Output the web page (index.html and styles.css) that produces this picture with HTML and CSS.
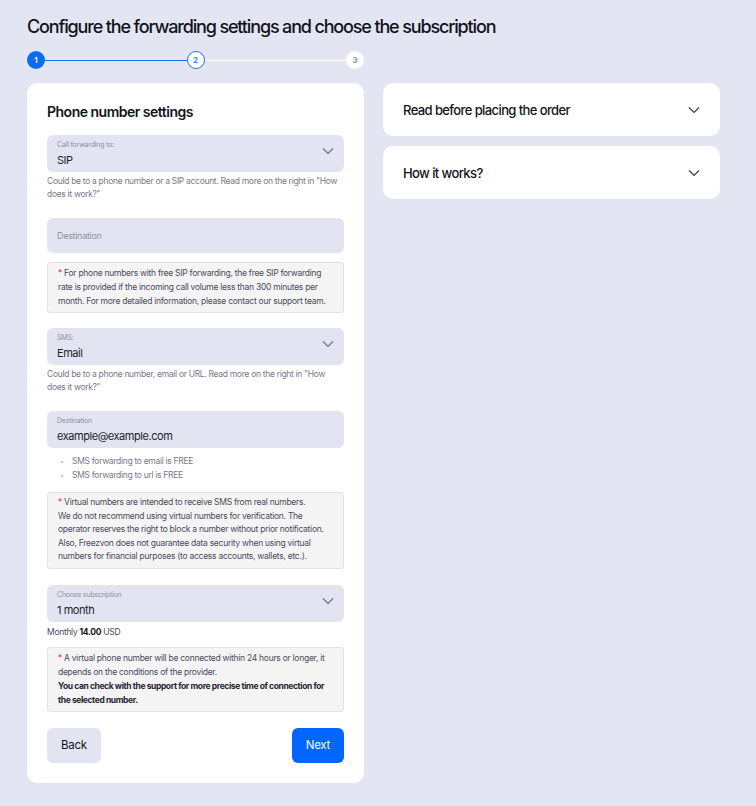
FILE: index.html
```html
<!DOCTYPE html>
<html lang="en">
<head>
    <meta charset="UTF-8">
    <meta name="viewport" content="width=device-width, initial-scale=1.0">
    <title>Configure forwarding</title>
    <link rel="stylesheet" href="styles.css">
</head>
<body>

    <div class="page">
        <h1>Configure the forwarding settings and choose the subscription</h1>

        <div class="stepper">
            <span class="step done">1</span>
            <span class="line active"></span>
            <span class="step current">2</span>
            <span class="line"></span>
            <span class="step">3</span>
        </div>

        <div class="columns">
            <div class="card">
                <h2>Phone number settings</h2>

                <div class="field select">
                    <span class="label">Call forwarding to:</span>
                    <span class="value">SIP</span>
                    <svg class="chevron" width="12" height="8" viewBox="0 0 12 8"><path d="M1 1.5l5 5 5-5" fill="none" stroke="#6b6f80" stroke-width="1.2"/></svg>
                </div>
                <p class="hint">Could be to a phone number or a SIP account. Read more on the right in "How does it work?"</p>

                <div class="field input">
                    <span class="placeholder">Destination</span>
                </div>

                <div class="note first">
                    <span class="star">*</span> For phone numbers with free SIP forwarding, the free SIP forwarding rate is provided if the incoming call volume less than 300 minutes per month. For more detailed information, please contact our support team.
                </div>

                <div class="field select">
                    <span class="label">SMS:</span>
                    <span class="value">Email</span>
                    <svg class="chevron" width="12" height="8" viewBox="0 0 12 8"><path d="M1 1.5l5 5 5-5" fill="none" stroke="#6b6f80" stroke-width="1.2"/></svg>
                </div>
                <p class="hint">Could be to a phone number, email or URL. Read more on the right in "How does it work?"</p>

                <div class="field filled">
                    <span class="label">Destination</span>
                    <span class="value">example@example.com</span>
                </div>

                <ul class="bullets">
                    <li>SMS forwarding to email is FREE</li>
                    <li>SMS forwarding to url is FREE</li>
                </ul>

                <div class="note tall">
                    <span class="star">*</span> Virtual numbers are intended to receive SMS from real numbers.<br>
                    We do not recommend using virtual numbers for verification. The operator reserves the right to block a number without prior notification. Also, Freezvon does not guarantee data security when using virtual numbers for financial purposes (to access accounts, wallets, etc.).
                </div>

                <div class="field select">
                    <span class="label">Choose subscription</span>
                    <span class="value">1 month</span>
                    <svg class="chevron" width="12" height="8" viewBox="0 0 12 8"><path d="M1 1.5l5 5 5-5" fill="none" stroke="#6b6f80" stroke-width="1.2"/></svg>
                </div>
                <p class="price">Monthly <b>14.00</b> USD</p>

                <div class="note">
                    <span class="star">*</span> A virtual phone number will be connected within 24 hours or longer, it depends on the conditions of the provider.<br>
                    <b>You can check with the support for more precise time of connection for the selected number.</b>
                </div>

                <div class="buttons">
                    <button class="back" type="button">Back</button>
                    <button class="next" type="button">Next</button>
                </div>
            </div>

            <div class="side">
                <div class="panel">
                    <span>Read before placing the order</span>
                    <svg width="12" height="8" viewBox="0 0 12 8"><path d="M1 1.5l5 5 5-5" fill="none" stroke="#3a3d4a" stroke-width="1.2"/></svg>
                </div>
                <div class="panel">
                    <span>How it works?</span>
                    <svg width="12" height="8" viewBox="0 0 12 8"><path d="M1 1.5l5 5 5-5" fill="none" stroke="#3a3d4a" stroke-width="1.2"/></svg>
                </div>
            </div>
        </div>
    </div>

</body>
</html>
```

FILE: styles.css
```css
body {
    margin: 0;
    background-color: #e4e5f2;
    font-family: Inter, "Noto Sans", sans-serif;
    color: #111320;
}
.page {
    padding: 14px 36px 24px 27px;
}
h1 {
    margin: 0;
    font-size: 18px;
    font-weight: 500;
    letter-spacing: -1.15px;
    line-height: 26px;
}
.stepper {
    display: flex;
    align-items: center;
    width: 337px;
    margin-top: 11px;
}
.step {
    width: 18px;
    height: 18px;
    border-radius: 50%;
    background: white;
    color: #8a8d99;
    font-size: 8px;
    font-weight: 600;
    display: flex;
    align-items: center;
    justify-content: center;
    box-sizing: border-box;
    flex-shrink: 0;
}
.step.done {
    background: #0b6cf7;
    color: white;
}
.step.current {
    border: 1.5px solid #1a73f5;
    color: #1a73f5;
}
.line {
    flex: 1;
    height: 1px;
    background: white;
}
.line.active {
    background: #1a73f5;
}
.columns {
    display: flex;
    gap: 19px;
    align-items: flex-start;
    margin-top: 14px;
}
.card {
    width: 337px;
    box-sizing: border-box;
    background: white;
    border-radius: 10px;
    padding: 20px 20px 20px;
}
h2 {
    margin: 0 0 14px;
    font-size: 14px;
    font-weight: 600;
    letter-spacing: -0.5px;
    line-height: 18px;
}
.field {
    position: relative;
    background: #e3e4f1;
    border-radius: 6px;
    height: 37px;
    box-sizing: border-box;
    padding: 5px 10px 0;
    display: flex;
    flex-direction: column;
}
.field.input {
    height: 35px;
    justify-content: center;
    padding-top: 0;
}
.label {
    font-size: 7px;
    color: #8d909c;
    line-height: 9px;
    letter-spacing: -0.2px;
}
.value {
    font-size: 11px;
    color: #1c1e2a;
    line-height: 16px;
    margin-top: 3px;
    letter-spacing: -0.45px;
}
.placeholder {
    font-size: 9px;
    color: #8d909c;
    letter-spacing: -0.3px;
}
.chevron {
    position: absolute;
    right: 10px;
    top: 12px;
}
.hint {
    margin: 3px 0 17px;
    font-size: 8.5px;
    line-height: 13px;
    color: #77798a;
    letter-spacing: -0.31px;
}
.note {
    margin: 9px 0 16px;
    background: #f4f4f5;
    border: 1px solid #e2e2e6;
    border-radius: 3px;
    padding: 3px 10px 4px;
    font-size: 8.5px;
    line-height: 14px;
    color: #4a4c58;
    letter-spacing: -0.27px;
}
.note.first {
    margin-bottom: 15px;
}
.note.tall {
    line-height: 13.6px;
    margin-top: 10px;
}
.note b {
    color: #23252f;
    letter-spacing: -0.4px;
}
.star {
    color: #e24a4a;
}
.bullets {
    margin: 6px 0 0;
    padding-left: 25px;
    font-size: 8.5px;
    line-height: 14px;
    color: #77798a;
    letter-spacing: -0.3px;
}
.bullets li::marker {
    color: #a8aab5;
    font-size: 7px;
}
.price {
    margin: 4px 0 0;
    font-size: 8.5px;
    line-height: 12px;
    color: #4a4c58;
    letter-spacing: -0.3px;
}
.price b {
    color: #111320;
}
.buttons {
    display: flex;
    justify-content: space-between;
    margin-top: 15px;
}
button {
    border: none;
    border-radius: 6px;
    height: 35px;
    padding: 0 14px;
    font-family: Inter, "Noto Sans", sans-serif;
    font-size: 11.5px;
    letter-spacing: -0.3px;
    cursor: pointer;
}
.back {
    background: #e3e4f1;
    color: #111320;
}
.next {
    background: #0066ff;
    color: white;
}
.side {
    width: 337px;
    display: flex;
    flex-direction: column;
    gap: 10px;
}
.panel {
    background: white;
    border-radius: 10px;
    height: 53px;
    padding: 0 20px;
    display: flex;
    align-items: center;
    justify-content: space-between;
    font-size: 13px;
    font-weight: 500;
    letter-spacing: -0.6px;
}
```
